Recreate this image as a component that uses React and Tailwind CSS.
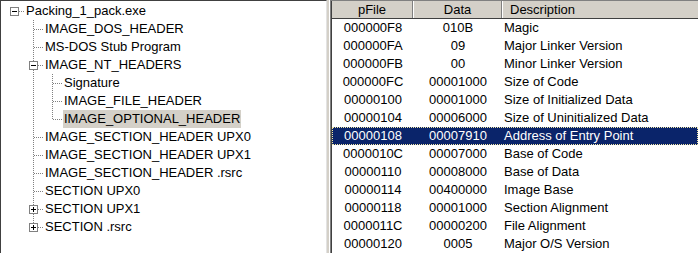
// PE viewer — tree of headers on the left, field list on the right
import React from "react";

const LINE_X = [13, 32, 51];
const TEXT_W = [24, 43, 62];

const tree = [
  { level: 0, text: "Packing_1_pack.exe", box: "minus" },
  { level: 1, text: "IMAGE_DOS_HEADER" },
  { level: 1, text: "MS-DOS Stub Program" },
  { level: 1, text: "IMAGE_NT_HEADERS", box: "minus" },
  { level: 2, text: "Signature" },
  { level: 2, text: "IMAGE_FILE_HEADER" },
  { level: 2, text: "IMAGE_OPTIONAL_HEADER", last: true, selected: true },
  { level: 1, text: "IMAGE_SECTION_HEADER UPX0" },
  { level: 1, text: "IMAGE_SECTION_HEADER UPX1" },
  { level: 1, text: "IMAGE_SECTION_HEADER .rsrc" },
  { level: 1, text: "SECTION UPX0" },
  { level: 1, text: "SECTION UPX1", box: "plus" },
  { level: 1, text: "SECTION .rsrc", box: "plus", last: true },
];

const fields = [
  ["000000F8", "010B", "Magic"],
  ["000000FA", "09", "Major Linker Version"],
  ["000000FB", "00", "Minor Linker Version"],
  ["000000FC", "00001000", "Size of Code"],
  ["00000100", "00001000", "Size of Initialized Data"],
  ["00000104", "00006000", "Size of Uninitialized Data"],
  ["00000108", "00007910", "Address of Entry Point"],
  ["0000010C", "00007000", "Base of Code"],
  ["00000110", "00008000", "Base of Data"],
  ["00000114", "00400000", "Image Base"],
  ["00000118", "00001000", "Section Alignment"],
  ["0000011C", "00000200", "File Alignment"],
  ["00000120", "0005", "Major O/S Version"],
];
const SELECTED = 6;

function Guides({ item }) {
  const w = TEXT_W[item.level];
  const x = LINE_X[item.level];
  const dot = { stroke: "#808080", strokeWidth: 1, strokeDasharray: "1 1" };
  return (
    <svg width={w} height="18" shapeRendering="crispEdges" className="shrink-0">
      {/* ancestor line for level 2 (NT headers has later siblings) */}
      {item.level === 2 && <line x1={LINE_X[1] + 0.5} y1="0" x2={LINE_X[1] + 0.5} y2="18" {...dot} />}
      {item.level > 0 && (
        <line x1={x + 0.5} y1="0" x2={x + 0.5} y2={item.last ? 10 : 18} {...dot} />
      )}
      <line x1={item.box ? x + 5 : x + 1} y1="9.5" x2={w} y2="9.5" {...dot} />
      {item.box && (
        <g>
          <rect x={x - 3.5} y="5.5" width="8" height="8" fill="#fff" stroke="#808080" />
          <rect x={x - 2} y="9" width="5" height="1" fill="#000" />
          {item.box === "plus" && <rect x={x} y="7" width="1" height="5" fill="#000" />}
        </g>
      )}
    </svg>
  );
}

function TreeRow({ item }) {
  return (
    <div className="flex h-[18px] items-center">
      <Guides item={item} />
      <span
        className={`h-[18px] leading-[18px] px-[1px] whitespace-nowrap ${
          item.selected ? "bg-[#d4d0c8]" : ""
        }`}
      >
        {item.text}
      </span>
    </div>
  );
}

export default function App() {
  return (
    <div className="flex w-[698px] h-[253px] overflow-hidden bg-[#d4d0c8] text-[13px] text-black font-['Liberation_Sans',Arial,sans-serif]">
      {/* Left: header tree */}
      <div className="w-[327px] shrink-0 h-full pt-[1px] bg-white border-t border-l border-[#404040] border-r border-r-[#e3e3e3] overflow-hidden">
        {tree.map((item, i) => (
          <TreeRow key={i} item={item} />
        ))}
      </div>

      {/* Splitter */}
      <div className="w-[2px] shrink-0" />
      <div className="w-px shrink-0 bg-white" />

      {/* Right: field list */}
      <div className="flex-1 h-full flex flex-col bg-white border-t border-l border-[#808080] overflow-hidden">
        <div className="flex h-full flex-col border-l border-[#404040]">
          <div className="flex h-[18px] shrink-0 bg-[#d4d0c8] border-b border-[#404040] leading-[18px]">
            <div className="w-[81px] shrink-0 text-center border-r border-[#808080]">pFile</div>
            <div className="w-[89px] shrink-0 text-center border-l border-white border-r border-r-[#808080]">Data</div>
            <div className="flex-1 pl-[7px] border-l border-white">Description</div>
          </div>
          {fields.map(([pFile, data, desc], i) => (
            <div
              key={pFile}
              className={`flex h-[18px] shrink-0 leading-[16px] border border-dotted ${
                i === SELECTED
                  ? "bg-[#0a246a] text-white border-[#f3e9a8]"
                  : "border-transparent"
              }`}
            >
              <div className="w-[80px] shrink-0 text-center">{pFile}</div>
              <div className="w-[90px] shrink-0 text-center">{data}</div>
              <div className="flex-1 pl-[1px] whitespace-nowrap">{desc}</div>
            </div>
          ))}
        </div>
      </div>
    </div>
  );
}
